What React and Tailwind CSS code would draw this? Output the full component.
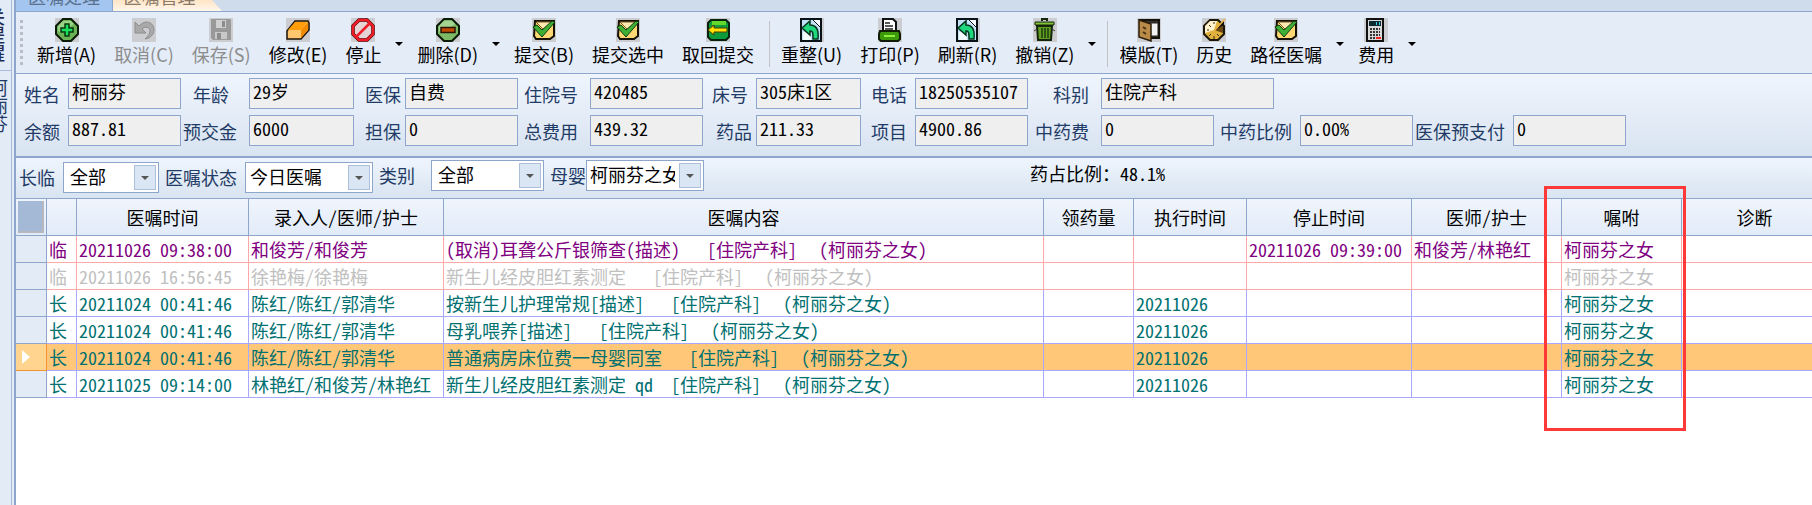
import React, { useState } from 'react';

const TOOLBAR = [
  { label: '新增(A)', icon: 'add' },
  { label: '取消(C)', icon: 'undo', disabled: true },
  { label: '保存(S)', icon: 'save', disabled: true },
  { label: '修改(E)', icon: 'edit' },
  { label: '停止', icon: 'stop', menu: true },
  { label: '删除(D)', icon: 'remove', menu: true },
  { label: '提交(B)', icon: 'submit' },
  { label: '提交选中', icon: 'submit' },
  { label: '取回提交', icon: 'back', separator: true },
  { label: '重整(U)', icon: 'refresh' },
  { label: '打印(P)', icon: 'print' },
  { label: '刷新(R)', icon: 'refresh' },
  { label: '撤销(Z)', icon: 'trash', menu: true, separator: true },
  { label: '模版(T)', icon: 'template' },
  { label: '历史', icon: 'history' },
  { label: '路径医嘱', icon: 'submit', menu: true },
  { label: '费用', icon: 'fee', menu: true },
];

// Two rows of read-only patient fields
const PATIENT_FIELDS = [
  [
    { id: 'name', label: '姓名', value: '柯丽芬', pad: 'pr-2' },
    { id: 'age', label: '年龄', value: '29岁', pad: 'pr-5' },
    { id: 'insurance', label: '医保', value: '自费', pad: 'pr-1' },
    { id: 'admission', label: '住院号', value: '420485', pad: 'pr-3' },
    { id: 'bed', label: '床号', value: '305床1区', pad: 'pr-2' },
    { id: 'phone', label: '电话', value: '18250535107', pad: 'pr-2' },
    { id: 'dept', label: '科别', value: '住院产科', pad: 'pr-3', wide: true },
  ],
  [
    { id: 'balance', label: '余额', value: '887.81', pad: 'pr-2' },
    { id: 'prepaid', label: '预交金', value: '6000', pad: 'pr-3' },
    { id: 'guarantee', label: '担保', value: '0', pad: 'pr-1' },
    { id: 'total', label: '总费用', value: '439.32', pad: 'pr-3' },
    { id: 'drug', label: '药品', value: '211.33', pad: 'pr-1' },
    { id: 'item', label: '项目', value: '4900.86', pad: 'pr-2' },
    { id: 'herbFee', label: '中药费', value: '0', pad: 'pr-3' },
    { id: 'herbRate', label: '中药比例', value: '0.00%', pad: 'pr-2' },
    { id: 'insurancePrepaid', label: '医保预支付', value: '0', pad: 'pr-2' },
  ],
];

const COLUMNS = [
  { title: '', width: 'w-[30px]' },
  { title: '医嘱时间', width: 'w-[172px]' },
  { title: '录入人/医师/护士', width: 'w-[195px]' },
  { title: '医嘱内容', width: 'w-[600px]' },
  { title: '领药量', width: 'w-[90px]' },
  { title: '执行时间', width: 'w-[113px]' },
  { title: '停止时间', width: 'w-[165px]' },
  { title: '医师/护士', width: 'w-[150px]' },
  { title: '嘱咐', width: 'w-[120px]' },
  { title: '诊断', width: 'w-[146px]' },
];

const ORDERS = [
  { type: '临', time: '20211026 09:38:00', staff: '和俊芳/和俊芳', content: '(取消)耳聋公斤银筛查(描述)   ', exec: '', stop: '20211026 09:39:00', stopStaff: '和俊芳/林艳红', status: 'cancelled' },
  { type: '临', time: '20211026 16:56:45', staff: '徐艳梅/徐艳梅', content: '新生儿经皮胆红素测定   ', exec: '', stop: '', stopStaff: '', status: 'draft' },
  { type: '长', time: '20211024 00:41:46', staff: '陈红/陈红/郭清华', content: '按新生儿护理常规[描述]   ', exec: '20211026', stop: '', stopStaff: '', status: 'active' },
  { type: '长', time: '20211024 00:41:46', staff: '陈红/陈红/郭清华', content: '母乳喂养[描述]   ', exec: '20211026', stop: '', stopStaff: '', status: 'active' },
  { type: '长', time: '20211024 00:41:46', staff: '陈红/陈红/郭清华', content: '普通病房床位费一母婴同室   ', exec: '20211026', stop: '', stopStaff: '', status: 'active' },
  { type: '长', time: '20211025 09:14:00', staff: '林艳红/和俊芳/林艳红', content: '新生儿经皮胆红素测定 qd  ', exec: '20211026', stop: '', stopStaff: '', status: 'active' },
];

const STATUS_TEXT = {
  cancelled: 'text-[#800080]',
  draft: 'text-[#c0c0c0]',
  active: 'text-[#007070]',
};

const ICONS = {
  add: (
    <>
      <path d="M8 1h8l7 7v8l-7 7H8l-7-7V8z" fill="#6cb356" stroke="#0c1a08" strokeWidth="2" />
      <path d="M8 3h8l3 3-13 9-3-2V8z" fill="#9ad286" />
      <path d="M10 6h4v4h4v4h-4v4h-4v-4H6v-4h4z" fill="#19e05c" stroke="#06390f" strokeWidth="1.5" />
    </>
  ),
  remove: (
    <>
      <path d="M8 1h8l7 7v8l-7 7H8l-7-7V8z" fill="#7cbb66" stroke="#0c1a08" strokeWidth="2" />
      <path d="M8 3h8l3 3-13 9-3-2V8z" fill="#a5d592" />
      <path d="M5 9.500h14v5H5z" fill="#bf4a00" stroke="#2b1404" strokeWidth="1.5" />
    </>
  ),
  undo: <path d="M3 4v11h11l-4-4c3-3 8-2 8 2 0 3-2 5-5 8 6-1 9-5 9-9 0-8-9-11-15-4z" fill="#a9a9a9" stroke="#8e8e8e" />,
  save: (
    <>
      <path d="M2 1h19l1 1v20H4l-2-2z" fill="#999" />
      <path d="M7 2h10v8H7z" fill="#d0d0d0" />
      <path d="M6 14h12v7H6z" fill="#c8c8c8" />
      <path d="M13 3h3v6h-3zM8 15h4v6H8z" fill="#8c8c8c" />
    </>
  ),
  edit: (
    <>
      <path d="M1 13L9 3h13l1 2v7l-8 9H1z" fill="#ffc66e" stroke="#1a1208" strokeWidth="1.500" />
      <path d="M2 12l7-8h12l-6 8z" fill="#ff9d0a" />
      <path d="M15 12l7-8v8l-7 8z" fill="#f08a00" />
    </>
  ),
  stop: (
    <>
      <path d="M8 2h8l6 6v8l-6 6H8l-6-6V8z" fill="#e6d3d3" stroke="#3a0505" strokeWidth="3.500" />
      <path d="M8 2h8l6 6v8l-6 6H8l-6-6V8zM5 19L19 5" fill="none" stroke="#f01c28" strokeWidth="2.500" />
    </>
  ),
  submit: (
    <>
      <path d="M3 3h19v15l-4 3H4l-2-3z" fill="#ffd873" stroke="#161208" strokeWidth="2" />
      <path d="M4 4h16l-8 8z" fill="#ffe9b0" stroke="#7a5a20" />
      <path d="M1 9l4-2 5 5L20 3l3 1-13 15z" fill="#3fae35" stroke="#0f3d10" />
    </>
  ),
  back: (
    <>
      <path d="M5 2h15l3 3v14l-3 3H5l-3-3V5z" fill="#0c9c3c" stroke="#08210f" strokeWidth="2" />
      <path d="M6 3h14v4H6z" fill="#63d92c" />
      <path d="M2 12l6-5v3h13v4H8v3z" fill="#ffe100" stroke="#4b3c00" />
    </>
  ),
  refresh: (
    <>
      <path d="M1 1h20v22H1z" fill="#bfe0f5" stroke="#0a1218" strokeWidth="2" />
      <path d="M12 2h8v8zM3 14h8v8H3z" fill="#f4fbff" />
      <path d="M13 2l7 7" stroke="#0a1218" />
      <path d="M2 10l8-7v4c6 0 9 4 8 14h-5c0-6 0-8-3-8v4z" fill="#1fd77c" stroke="#05331c" strokeWidth="1.500" />
    </>
  ),
  print: (
    <>
      <path d="M5 1h10l3 3v10H5z" fill="#fff" stroke="#111" strokeWidth="2" />
      <path d="M7 5h5M7 8h8M7 11h8" stroke="#222" strokeWidth="1.500" />
      <path d="M2 13h19l1 3v5l-2 2H3l-2-2v-5z" fill="#3c9a0b" stroke="#101c06" strokeWidth="2" />
      <path d="M6 17h11v2H6z" fill="#8df03c" />
    </>
  ),
  trash: (
    <>
      <path d="M4 8h15l-1 14H5z" fill="#5f9f23" stroke="#16240a" strokeWidth="2" />
      <path d="M2 4h19v3H2z" fill="#7fc13a" stroke="#16240a" />
      <path d="M9 3V1h5v2" fill="none" stroke="#16240a" strokeWidth="2" />
      <path d="M9 10v10M12 10v10M15 10v10" stroke="#20380c" strokeWidth="1.500" />
      <path d="M1 13l3-2M22 13l-3-2" stroke="#333" />
    </>
  ),
  template: (
    <>
      <path d="M3 2h19v18H12z" fill="#39342c" stroke="#15110b" strokeWidth="2" />
      <path d="M13 5h8v13h-8z" fill="#f2f2f2" stroke="#222" />
      <path d="M2 2l12 4v17L2 19z" fill="#b98a48" stroke="#2a1d0a" strokeWidth="1.500" />
      <path d="M6 9l3 2M6 14l3 2" stroke="#4a3413" strokeWidth="2" />
    </>
  ),
  history: (
    <>
      <path d="M8 2h8l6 6v8l-6 6H8l-6-6V8z" fill="#e0b13c" stroke="#1c1608" strokeWidth="2" />
      <path d="M8 3h7l-3 9-9 3V8z" fill="#fff2cc" />
      <path d="M12 12l9-5v8z" fill="#6d4a12" />
      <path d="M13 12l9-5V2z" fill="#111" />
      <path d="M12 13L23 1" stroke="#f0b440" strokeWidth="1.500" />
      <path d="M5 12h2M7 7l2 2M12 4v2M12 18v3M7 18l2-2M17 18l-2-2" stroke="#3a2b08" />
    </>
  ),
  fee: (
    <>
      <path d="M3 1h16v22H3z" fill="#d9d9d9" stroke="#111" strokeWidth="2" />
      <path d="M5 3h12v5H5z" fill="#102a33" />
      <path d="M12 4h1v3h-1zM15 4h1v3h-1z" fill="#2fd6e6" />
      <path d="M6 11h10M6 14h10M6 17h10M6 20h5" stroke="#333" strokeWidth="2" strokeDasharray="2 1" />
      <path d="M12 19h5v2h-5z" fill="#ff2020" />
    </>
  ),
};

const ToolIcon = ({ name }) => (
  <svg viewBox="0 0 24 24" className="h-6 w-6 bg-[#cbcdd0]" aria-hidden="true">
    {ICONS[name]}
  </svg>
);

const ToolButton = ({ item }) => (
  <>
    <button
      type="button"
      disabled={item.disabled}
      className="flex flex-col items-center px-[9px] whitespace-nowrap text-black disabled:text-[#8d8d8d]"
    >
      <ToolIcon name={item.icon} />
      <span className="leading-6">{item.label}</span>
    </button>
    {item.menu && (
      <button type="button" aria-label={`${item.label}菜单`} className="flex w-[18px] items-center justify-center">
        <svg viewBox="0 0 8 4" className="h-1 w-2"><path d="M0 0h8L4 4z" /></svg>
      </button>
    )}
    {item.separator && <span className="mr-[2px] ml-[6px] h-[46px] w-px self-center bg-[#c3c3c3]" />}
  </>
);

const Field = ({ field }) => (
  <>
    <label htmlFor={field.id} className={`pt-[2px] text-right whitespace-nowrap text-[#1f3b66] ${field.pad}`}>
      {field.label}
    </label>
    <input
      id={field.id}
      readOnly
      value={field.value}
      className={`h-[31px] w-full min-w-0 border border-[#8ea6cc] bg-[#efefef] px-[3px] pb-[6px] text-black outline-none [font-feature-settings:'hwid'] ${field.wide ? 'col-span-2 max-w-[173px]' : ''}`}
    />
  </>
);

const Filter = ({ id, label, options, width, gap = 'ml-2', pad = 'pl-1', raised }) => {
  const [value, setValue] = useState(options[0]);
  return (
    <div className={`flex items-center ${raised ? 'pb-1' : ''}`}>
      <label htmlFor={id} className="whitespace-nowrap text-[#1f3b66]">{label}</label>
      <div className={`relative ${gap} ${width}`}>
        <select
          id={id}
          value={value}
          onChange={(e) => setValue(e.target.value)}
          className={`block h-[31px] w-full appearance-none border border-[#8ea6cc] bg-white pr-7 pb-1 text-black outline-none ${pad}`}
        >
          {options.map((option) => (
            <option key={option}>{option}</option>
          ))}
        </select>
        <span className="pointer-events-none absolute top-[3px] right-[3px] flex h-[25px] w-[22px] items-center justify-center border border-[#aebfdc] bg-[#dbe6f4]">
          <svg viewBox="0 0 8 4" className="h-1 w-2"><path d="M0 0h8L4 4z" fill="#555" /></svg>
        </span>
      </div>
    </div>
  );
};

const OrderTable = () => {
  const [selected, setSelected] = useState(4);

  return (
    <table className="w-full table-fixed border-separate border-spacing-0">
      <colgroup>
        <col className="w-[31px]" />
        {COLUMNS.map((col, i) => (
          <col key={i} className={col.width} />
        ))}
      </colgroup>
      <thead>
        <tr className="h-[37px] bg-linear-to-b from-[#f0f5fd] to-[#e1ebf8]">
          <th className="border-r border-b border-[#8ea6cc] p-[2px]">
            <div className="h-8 border-r-2 border-b-2 border-[#b5b9bf] bg-[#a3b9d6]" />
          </th>
          {COLUMNS.map((col, i) => (
            <th key={i} className="border-r border-b border-[#8ea6cc] p-0 font-normal text-black">{col.title}</th>
          ))}
        </tr>
      </thead>
      <tbody>
        {ORDERS.map((order, i) => {
          const active = i === selected;
          const line = order.type === '临' ? 'border-[#ffa8a8]' : 'border-[#a8a8ff]';
          const cell = `h-[27px] overflow-hidden border-r border-b p-0 pl-[2px] ${line}`;
          return (
            <tr
              key={i}
              onClick={() => setSelected(i)}
              className={`leading-[26px] whitespace-pre ${STATUS_TEXT[order.status]} ${active ? 'bg-[#ffc777]' : 'bg-white'}`}
            >
              <td className={`border-r border-b p-0 ${active ? 'border-[#f29436] bg-[#ffd48e]' : 'border-[#8ea6cc] bg-[#e3ebf6]'}`}>
                {active && (
                  <svg viewBox="0 0 8 14" className="ml-[6px] h-[14px] w-2"><path d="M0 0l8 7-8 7z" fill="#fff" /></svg>
                )}
              </td>
              <td className={cell}>{order.type}</td>
              <td className={cell}>{order.time}</td>
              <td className={cell}>{order.staff}</td>
              <td className={cell}>
                {order.content}[住院产科]<span className="ml-[22px]">(柯丽芬之女)</span>
              </td>
              <td className={cell} />
              <td className={cell}>{order.exec}</td>
              <td className={cell}>{order.stop}</td>
              <td className={cell}>{order.stopStaff}</td>
              <td className={cell}>柯丽芬之女</td>
              <td className={cell} />
            </tr>
          );
        })}
      </tbody>
    </table>
  );
};

const App = () => (
  <div className="relative flex min-h-screen overflow-hidden bg-white font-['Noto_Sans_CJK_SC',sans-serif] text-[18px] leading-[27px]">
    {/* Side tabs */}
    <aside className="flex w-4 shrink-0 flex-col overflow-hidden border-r-2 border-[#8ea6cc] bg-[#e3ebf7]">
      <button type="button" className="flex h-[71px] w-3 items-end justify-end overflow-hidden border-r border-b border-[#a9bcd9] pr-[6px] pb-2 text-[#1f2f55]">
        <span className="leading-[18px] font-medium [writing-mode:vertical-rl]">关提醒</span>
      </button>
      <button type="button" className="flex w-3 flex-1 items-start justify-end overflow-hidden border-r border-[#a9bcd9] pt-2 pr-[3px] text-[#1f3b66]">
        <span className="leading-[18px] [writing-mode:vertical-rl]">柯丽芬</span>
      </button>
    </aside>

    <main className="min-w-0 flex-1 overflow-hidden">
      {/* Page tabs */}
      <nav className="flex h-3 items-end overflow-hidden border-b border-[#8ea6cc] bg-[#cfdcec]">
        <button type="button" className="h-7 w-[97px] shrink-0 border-r border-[#8ea6cc] bg-[#a3c5ef] pb-1 text-[#5a7190]">医嘱处理</button>
        <button type="button" className="h-7 w-[109px] shrink-0 bg-linear-to-b from-[#ffc98a] to-[#fff6ea] pr-4 pb-1 text-[#8a7a6a] [clip-path:polygon(0_0,82%_0,91%_62%,100%_100%,0_100%)]">医嘱管理</button>
      </nav>

      <div className="flex h-[62px] border-b border-[#8ea6cc] bg-[#e4ecf8] pt-[6px]">
        <span className="mt-[2px] mr-[5px] ml-1 h-[46px] w-[3px] bg-[repeating-linear-gradient(to_bottom,#b9bec6_0_3px,transparent_3px_6px)]" />
        <div className="flex items-start">
          {TOOLBAR.map((item) => (
            <div key={item.label} className="flex h-[52px]">
              <ToolButton item={item} />
            </div>
          ))}
        </div>
      </div>

      <section className="flex flex-col gap-[6px] border-b-2 border-[#8ea6cc] bg-linear-to-b from-[#eff5fd] via-[#e4ecf7] to-[#d8e4f1] pt-1 pb-[10px]">
        {PATIENT_FIELDS.map((row, i) => (
          <div
            key={i}
            className="grid grid-cols-[52px_113px_68px_105px_51px_113px_72px_113px_53px_105px_54px_113px_73px_113px_86px_113px_100px_113px] items-center"
          >
            {row.map((field) => (
              <Field key={field.id} field={field} />
            ))}
          </div>
        ))}
      </section>

      <section className="flex border-b border-[#8ea6cc] bg-linear-to-b from-[#eff5fd] to-[#d8e4f1] pt-[2px] pb-[3px] pl-[3px]">
        <div className="flex gap-[6px]">
          <Filter id="term" label="长临" options={['全部', '长期', '临时']} width="w-24" pad="pl-[6px]" />
          <Filter id="status" label="医嘱状态" options={['今日医嘱', '全部']} width="w-32" />
          <Filter id="category" label="类别" options={['全部', '药品', '项目']} width="w-[113px]" gap="ml-4" pad="pl-[6px]" raised />
          <Filter id="baby" label="母婴" options={['柯丽芬之女', '柯丽芬']} width="w-[118px]" gap="ml-0" pad="pl-[3px]" raised />
        </div>
        <p className="ml-[326px] whitespace-nowrap text-black [font-feature-settings:'hwid']">药占比例：48.1%</p>
      </section>

      <div className="overflow-hidden [font-feature-settings:'hwid']">
        <OrderTable />
      </div>
    </main>

    {/* Highlight around the 嘱咐 column */}
    <div className="pointer-events-none absolute top-[186px] left-[1544px] h-[245px] w-[142px] border-3 border-[#ff3838]" />
  </div>
);

export default App;
